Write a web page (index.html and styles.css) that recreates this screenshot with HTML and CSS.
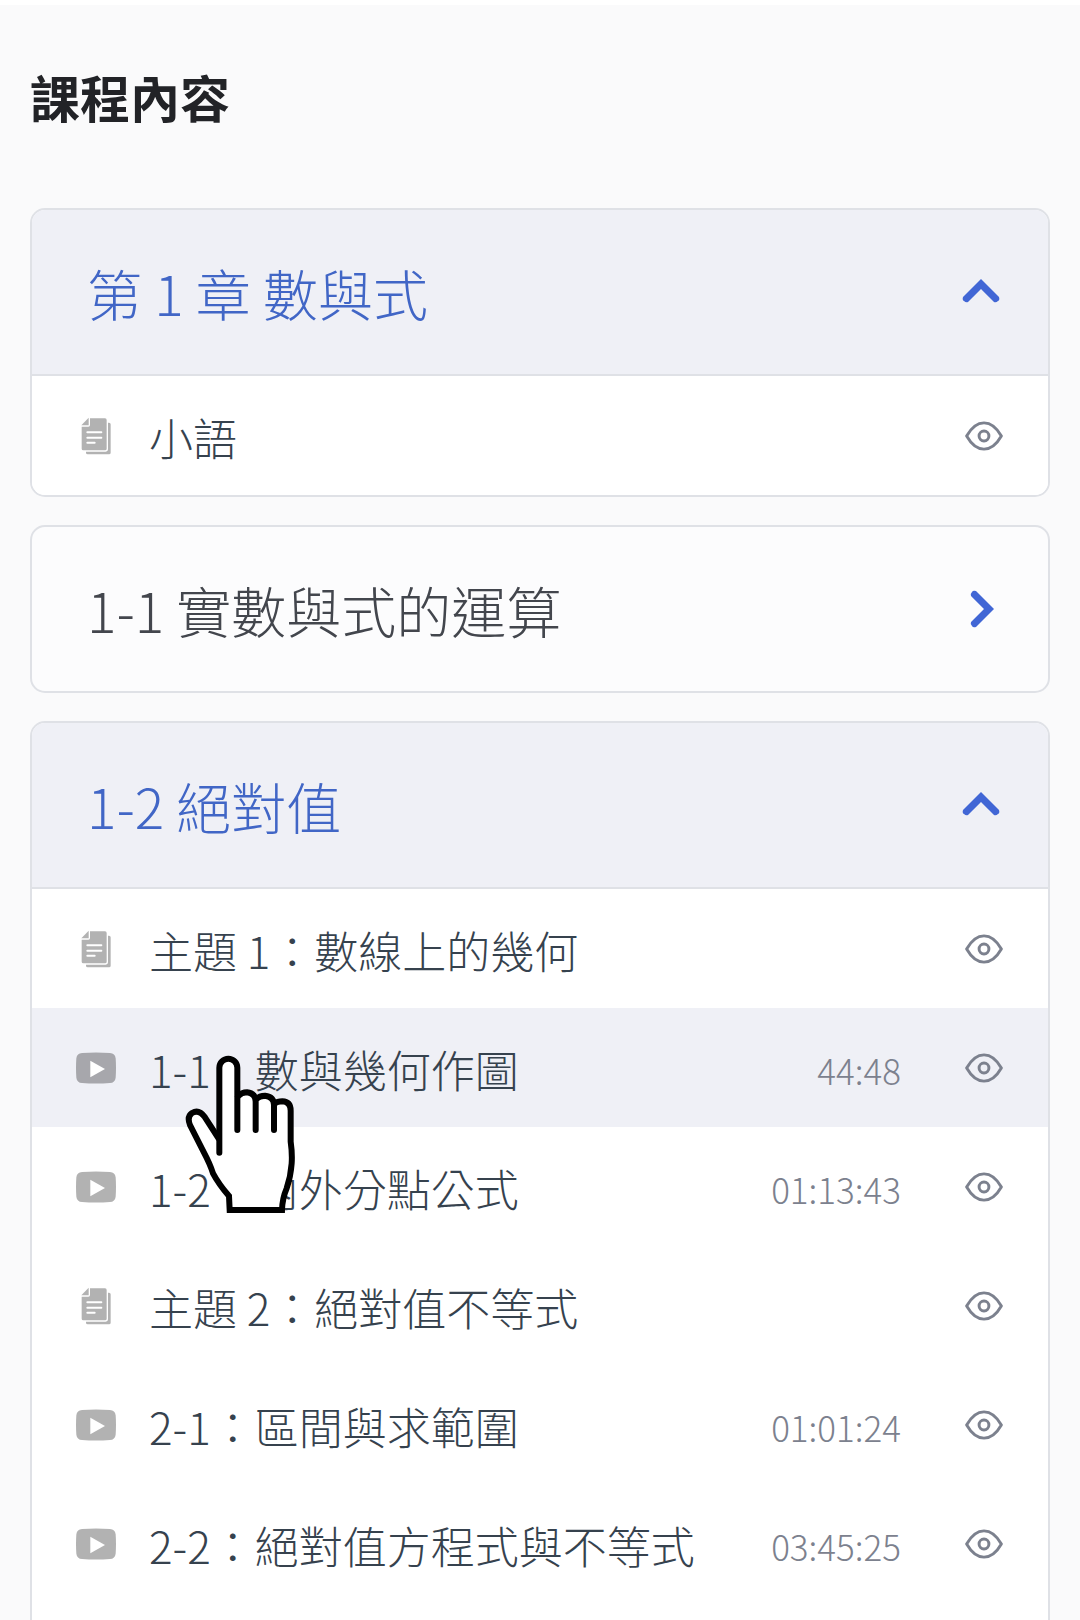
FILE: index.html
```
<!DOCTYPE html>
<html lang="zh-Hant">
<head>
  <meta charset="UTF-8">
  <meta name="viewport" content="width=device-width, initial-scale=1.0">
  <title>課程內容</title>
  <link rel="stylesheet" href="styles.css">
</head>
<body>
  <!-- shared icons -->
  <svg class="sprite" aria-hidden="true">
    <symbol id="icon-doc" viewBox="64 80 90 114">
      <path d="M65 105 L87 82 V105 Z"/>
      <path d="M91 84 H136 Q141 84 141 89 V175 Q141 180 136 180 H71 Q66 180 66 175 V109 H86 Q91 109 91 104 Z"/>
      <path d="M145 97 H148 Q153 97 153 102 V187 Q153 192 148 192 H84 Q79 192 79 187 V184 H138 Q145 184 145 177 Z"/>
      <path class="icon-cut" d="M83 126 H125 M83 142 H125 M83 157 H105"/>
    </symbol>
    <symbol id="icon-video" viewBox="48 66 120 94">
      <path d="M66 68 Q108 65 150 68 Q165 69 167 84 Q169 113 167 142 Q165 157 150 158 Q108 161 66 158 Q51 157 49 142 Q47 113 49 84 Q51 69 66 68 Z"/>
      <path class="icon-play" d="M91 91 L135 116 L91 141 Z"/>
    </symbol>
    <symbol id="icon-eye" viewBox="197 543 116 90">
      <path d="M202 588 C214 567 231 548 255 548 C279 548 296 567 308 588 C296 609 279 628 255 628 C231 628 214 609 202 588 Z"/>
      <circle cx="255" cy="588" r="15"/>
    </symbol>
    <symbol id="icon-chevron" viewBox="0 0 38 38">
      <path d="M19 6 L37 24 Q38 27 36 28 Q34 30 32 29 L19 16 L6 29 Q4 30 2 28 Q0 27 1 24 Z"/>
    </symbol>
  </svg>

  <main class="course">
    <h1 class="course-title">課程內容</h1>

    <section class="chapter open">
      <h2 class="chapter-heading">
        <button class="chapter-toggle" type="button" aria-expanded="true">
          <span>第 1 章 數與式</span>
          <svg class="chevron" aria-hidden="true"><use href="#icon-chevron"/></svg>
        </button>
      </h2>
      <ul class="lessons">
        <li class="lesson">
          <a class="lesson-link" href="#">
            <span class="lesson-type"><svg class="doc"><use href="#icon-doc"/></svg></span>
            <span class="lesson-name">小語</span>
            <svg class="eye"><use href="#icon-eye"/></svg>
          </a>
        </li>
      </ul>
    </section>

    <section class="chapter">
      <h2 class="chapter-heading">
        <button class="chapter-toggle" type="button" aria-expanded="false">
          <span>1-1 實數與式的運算</span>
          <svg class="chevron" aria-hidden="true"><use href="#icon-chevron"/></svg>
        </button>
      </h2>
    </section>

    <section class="chapter open">
      <h2 class="chapter-heading">
        <button class="chapter-toggle" type="button" aria-expanded="true">
          <span>1-2 絕對值</span>
          <svg class="chevron" aria-hidden="true"><use href="#icon-chevron"/></svg>
        </button>
      </h2>
      <ul class="lessons lessons-long">
        <li class="lesson">
          <a class="lesson-link" href="#">
            <span class="lesson-type"><svg class="doc"><use href="#icon-doc"/></svg></span>
            <span class="lesson-name">主題 1：數線上的幾何</span>
            <svg class="eye"><use href="#icon-eye"/></svg>
          </a>
        </li>
        <li class="lesson active">
          <a class="lesson-link" href="#">
            <span class="lesson-type"><svg class="video"><use href="#icon-video"/></svg></span>
            <span class="lesson-name">1-1：數與幾何作圖</span>
            <span class="lesson-time">44:48</span>
            <svg class="eye"><use href="#icon-eye"/></svg>
          </a>
          <svg class="pointer" viewBox="375 75 330 474" aria-hidden="true">
            <path class="pointer-fill" d="M478 330 V113 A27 27 0 0 1 532 113 V200 Q560 172 587 210 Q615 185 642 222 Q692 200 692 242 V335 Q697 370 695 400 Q692 440 680 475 Q667 505 666 540 H509 L507 498 Q476 462 459 430 Q450 402 432 368 L392 285 Q380 262 395 251 Q417 237 435 262 Z"/>
            <path d="M478 368 V113 A27 27 0 0 1 532 113 V300"/>
            <path d="M534 199 Q545 187 561 187 Q587 190 587 215 V300"/>
            <path d="M588 208 Q598 197 615 197 Q642 200 642 225 V300"/>
            <path d="M643 221 Q652 214 667 214 Q692 215 692 242 V335 Q697 370 695 400 Q692 440 680 475 Q667 505 666 540 H509 L507 498 Q476 462 459 430 Q450 402 432 368 L390 285 Q380 260 396 249 Q417 237 435 262 L475 324"/>
          </svg>
        </li>
        <li class="lesson">
          <a class="lesson-link" href="#">
            <span class="lesson-type"><svg class="video"><use href="#icon-video"/></svg></span>
            <span class="lesson-name">1-2：內外分點公式</span>
            <span class="lesson-time">01:13:43</span>
            <svg class="eye"><use href="#icon-eye"/></svg>
          </a>
        </li>
        <li class="lesson">
          <a class="lesson-link" href="#">
            <span class="lesson-type"><svg class="doc"><use href="#icon-doc"/></svg></span>
            <span class="lesson-name">主題 2：絕對值不等式</span>
            <svg class="eye"><use href="#icon-eye"/></svg>
          </a>
        </li>
        <li class="lesson">
          <a class="lesson-link" href="#">
            <span class="lesson-type"><svg class="video"><use href="#icon-video"/></svg></span>
            <span class="lesson-name">2-1：區間與求範圍</span>
            <span class="lesson-time">01:01:24</span>
            <svg class="eye"><use href="#icon-eye"/></svg>
          </a>
        </li>
        <li class="lesson">
          <a class="lesson-link" href="#">
            <span class="lesson-type"><svg class="video"><use href="#icon-video"/></svg></span>
            <span class="lesson-name">2-2：絕對值方程式與不等式</span>
            <span class="lesson-time">03:45:25</span>
            <svg class="eye"><use href="#icon-eye"/></svg>
          </a>
        </li>
      </ul>
    </section>
  </main>
</body>
</html>
```

FILE: styles.css
```
* {
  box-sizing: border-box;
}

body {
  margin: 0;
  border-top: 5px solid #ffffff;
  background-color: #fafafb;
  font-family: "Noto Sans CJK TC", sans-serif;
  font-weight: 300;
  color: #36424e;
}

.sprite {
  display: none;
}

.course {
  display: flex;
  flex-direction: column;
  gap: 28px;
  padding: 55px 30px 28px;
}

.course-title {
  margin: 0 0 48px;
  font-size: 50px;
  line-height: 72px;
  font-weight: 700;
  color: #222327;
}

.chapter {
  border: 2px solid #dfe1e6;
  border-radius: 15px;
  background-color: #fcfcfd;
  overflow: hidden;
}

.chapter-heading {
  margin: 0;
}

.chapter-toggle {
  display: flex;
  align-items: center;
  justify-content: space-between;
  width: 100%;
  padding: 42px 48px 42px 55px;
  border: none;
  background: none;
  font-family: inherit;
  font-size: 55px;
  font-weight: 300;
  line-height: 80px;
  text-align: left;
  color: #43464d;
  cursor: pointer;
}

.open .chapter-toggle {
  background-color: #eff0f6;
  color: #4166c6;
}

.chevron {
  width: 38px;
  height: 38px;
  fill: #4166d5;
  transform: rotate(90deg);
}

.open .chevron {
  transform: none;
}

.lessons {
  margin: 0;
  padding: 0;
  border-top: 2px solid #dfe1e6;
  background-color: #ffffff;
  list-style: none;
}

.lessons-long {
  padding-bottom: 40px;
}

.lesson {
  position: relative;
}

.lesson-link {
  display: flex;
  align-items: center;
  padding: 26px 45px 26px 44px;
  font-size: 44px;
  line-height: 64px;
  color: inherit;
  text-decoration: none;
}

.lesson.active {
  background-color: #eff0f6;
}

.lesson-type {
  display: flex;
  justify-content: center;
  width: 40px;
  margin-right: 33px;
  fill: rgba(0, 0, 0, 0.3);
}

.doc {
  width: 30px;
  height: 38px;
}

.video {
  width: 40px;
  height: 32px;
}

.icon-cut {
  fill: none;
  stroke: #ffffff;
  stroke-width: 6;
  stroke-linecap: round;
}

.icon-play {
  fill: #ffffff;
}

.lesson-name {
  flex: 1;
  padding-top: 3px;
}

.lesson-time {
  padding-top: 5px;
  font-size: 35px;
  line-height: 52px;
  color: #7c818e;
}

.eye {
  width: 38px;
  height: 30px;
  margin-left: 64px;
  fill: none;
  stroke: #7c818e;
  stroke-width: 9;
  stroke-linejoin: round;
}

/* hand resting over the active lesson */
.pointer {
  position: absolute;
  top: 47px;
  left: 153px;
  z-index: 1;
  width: 110px;
  height: 158px;
  fill: none;
  stroke: #000000;
  stroke-width: 18;
  stroke-linecap: round;
}

.pointer-fill {
  fill: #ffffff;
  stroke: none;
}
```
